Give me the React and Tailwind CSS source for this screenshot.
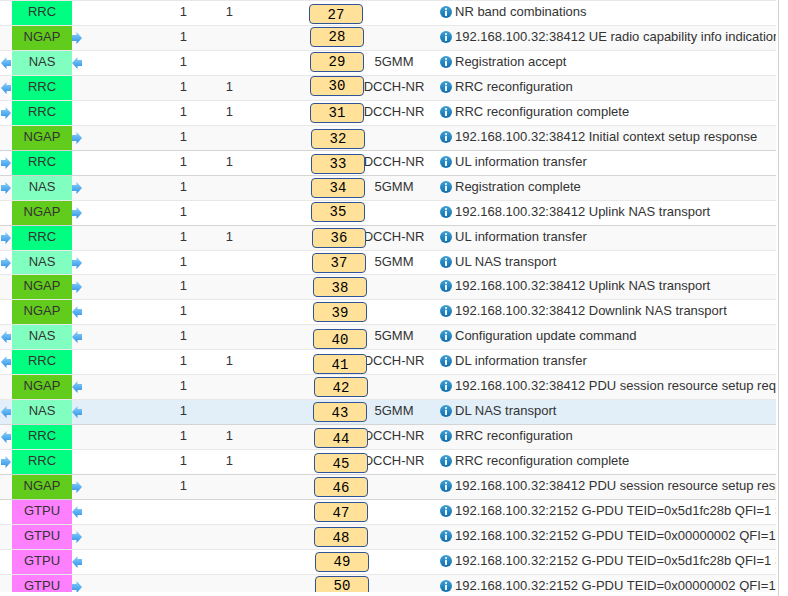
const protoBg = {
  RRC: 'bg-[#00ff80]',
  NGAP: 'bg-[#62cc1c]',
  NAS: 'bg-[#80ffc0]',
  GTPU: 'bg-[#ff80ff]',
};

const IP = '192.168.100.32:38412 ';
const GT = '192.168.100.32:2152 G-PDU TEID=';

// n, proto, left arrow, right arrow, c1, c2, type, info, badge x, badge y (from row top), dark top border
const rows = [
  [27, 'RRC', '', '', 1, 1, '', 'NR band combinations', 309, 4, 0],
  [28, 'NGAP', '', 'r', 1, 0, '', IP + 'UE radio capability info indication', 310, 2, 0],
  [29, 'NAS', 'l', 'l', 1, 0, '5GMM', 'Registration accept', 310, 2, 0],
  [30, 'RRC', 'l', '', 1, 1, 'DCCH-NR', 'RRC reconfiguration', 310, 1, 0],
  [31, 'RRC', 'r', '', 1, 1, 'DCCH-NR', 'RRC reconfiguration complete', 310, 3, 0],
  [32, 'NGAP', '', 'r', 1, 0, '', IP + 'Initial context setup response', 311, 4, 0],
  [33, 'RRC', 'r', '', 1, 1, 'DCCH-NR', 'UL information transfer', 311, 4, 1],
  [34, 'NAS', 'r', 'r', 1, 0, '5GMM', 'Registration complete', 311, 3, 1],
  [35, 'NGAP', '', 'r', 1, 0, '', IP + 'Uplink NAS transport', 311, 2, 0],
  [36, 'RRC', 'r', '', 1, 1, 'DCCH-NR', 'UL information transfer', 312, 3, 1],
  [37, 'NAS', 'r', 'r', 1, 0, '5GMM', 'UL NAS transport', 312, 3, 0],
  [38, 'NGAP', '', 'r', 1, 0, '', IP + 'Uplink NAS transport', 313, 3, 0],
  [39, 'NGAP', '', 'l', 1, 0, '', IP + 'Downlink NAS transport', 313, 3, 0],
  [40, 'NAS', 'l', 'l', 1, 0, '5GMM', 'Configuration update command', 313, 5, 0],
  [41, 'RRC', 'l', '', 1, 1, 'DCCH-NR', 'DL information transfer', 313, 5, 0],
  [42, 'NGAP', '', 'l', 1, 0, '', IP + 'PDU session resource setup request', 314, 3, 0],
  [43, 'NAS', 'l', 'l', 1, 0, '5GMM', 'DL NAS transport', 313, 3, 0],
  [44, 'RRC', 'l', '', 1, 1, 'DCCH-NR', 'RRC reconfiguration', 314, 4, 1],
  [45, 'RRC', 'r', '', 1, 1, 'DCCH-NR', 'RRC reconfiguration complete', 314, 4, 0],
  [46, 'NGAP', '', 'r', 1, 0, '', IP + 'PDU session resource setup response', 314, 3, 1],
  [47, 'GTPU', '', 'l', 0, 0, '', GT + '0x5d1fc28b QFI=1 SN=1', 314, 3, 1],
  [48, 'GTPU', '', 'r', 0, 0, '', GT + '0x00000002 QFI=1', 314, 3, 0],
  [49, 'GTPU', '', 'l', 0, 0, '', GT + '0x5d1fc28b QFI=1 SN=1', 315, 3, 0],
  [50, 'GTPU', '', 'r', 0, 0, '', GT + '0x00000002 QFI=1', 315, 2, 0],
];

const Arrow = ({ dir, id }) => (
  <svg width="10" height="12" viewBox="0 0 10 12" className={dir === 'r' ? '' : '-scale-x-100'}>
    <defs>
      <linearGradient id={id} x1="0" y1="0" x2="0" y2="1">
        <stop offset="0" stopColor="#8ed2fb" />
        <stop offset="1" stopColor="#2a8fe6" />
      </linearGradient>
    </defs>
    <path d="M0 3h4.500V0L10 6l-5.500 6V9H0z" fill={`url(#${id})`} />
  </svg>
);

const Info = ({ id }) => (
  <svg width="12" height="12" viewBox="0 0 13 13" className="shrink-0">
    <defs>
      <linearGradient id={id} x1="0" y1="0" x2="0" y2="1">
        <stop offset="0" stopColor="#3f9fd6" />
        <stop offset="1" stopColor="#0f6fae" />
      </linearGradient>
    </defs>
    <circle cx="6.500" cy="6.500" r="6.500" fill={`url(#${id})`} />
    <rect x="5.500" y="2.200" width="2" height="2" rx="0.800" fill="#fff" />
    <rect x="5.500" y="5.200" width="2" height="5.600" fill="#fff" />
  </svg>
);

const Row = ({ row, i }) => {
  const [n, proto, left, right, c1, c2, type, info, bx, by, dark] = row;
  const selected = n === 43;
  const bg = selected ? 'bg-[#e2eef8]' : n % 2 === 0 ? 'bg-[#f9f9f9]' : 'bg-white';
  return (
    <div className={`relative flex h-[24.96px] shrink-0 items-stretch border-t ${dark ? 'border-[#d4d4d4]' : 'border-[#e8e8e8]'} ${bg}`}>
      <div className="flex w-[12px] items-center pl-[1px]">
        {left && <Arrow dir={left} id={`al${i}`} />}
      </div>
      <div className={`flex w-[60px] items-start justify-center pt-[1px] ${protoBg[proto]}`}>{proto}</div>
      <div className="flex w-[14px] items-center">
        {right && <Arrow dir={right} id={`ar${i}`} />}
      </div>
      <div className="w-[103px] pt-[1px] pr-[2px] text-right">{c1 ? '1' : ''}</div>
      <div className="w-[47px] pt-[1px] pr-[3px] text-right">{c2 ? '1' : ''}</div>
      <div className="w-[120px]" />
      <div className="w-[76px] pt-[1px] text-center">{type}</div>
      <div className="flex min-w-0 flex-1 items-start gap-[3px] overflow-hidden whitespace-nowrap pt-[1px] pl-[8px]">
        <span className="mt-[4px] shrink-0"><Info id={`i${i}`} /></span>
        <span>{info}</span>
      </div>
      <div
        className="absolute flex h-[20px] w-[54px] items-center justify-center rounded-[4px] border border-[#2f5597] bg-[#ffe199] pt-[2px] font-['Liberation_Mono',monospace] text-[14px] text-black"
        style={{ left: bx, top: by - 1 }}
      >
        {n}
      </div>
    </div>
  );
};

export default function App() {
  return (
    <div className="flex h-[596px] w-[788px] overflow-hidden bg-white font-['Liberation_Sans',Arial,sans-serif] text-[13px] text-[#333]">
      <div className="flex h-[592px] w-[776px] flex-col overflow-hidden">
        {rows.map((row, i) => (
          <Row key={row[0]} row={row} i={i} />
        ))}
      </div>
      <div className="ml-[2px] w-[1px] bg-[#d0d0d0]" />
    </div>
  );
}
